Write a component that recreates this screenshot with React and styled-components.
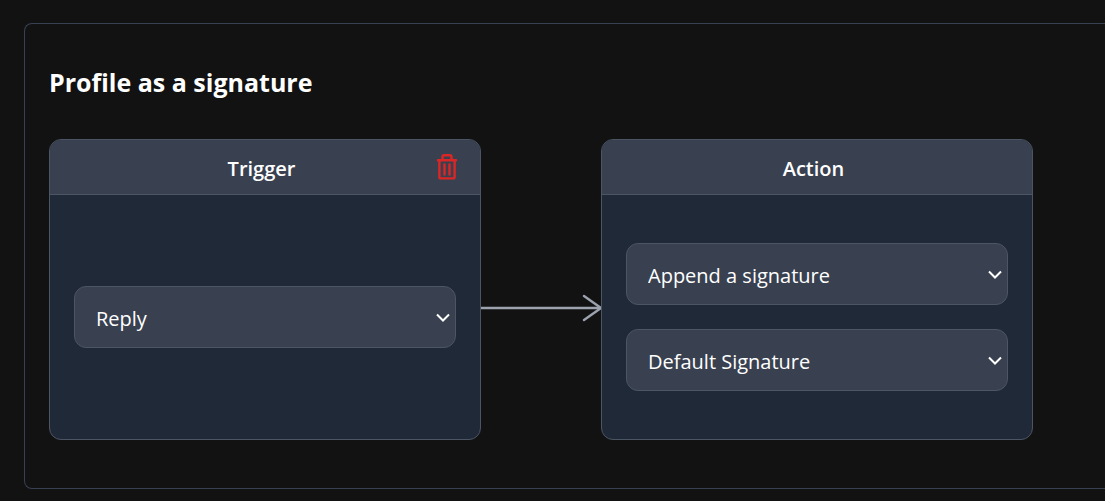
import React from "react";
import styled, { createGlobalStyle } from "styled-components";

const GlobalStyle = createGlobalStyle`
  *, *::before, *::after { box-sizing: border-box; }
  body {
    margin: 0;
    background: #121212;
    color: #ffffff;
    font-family: "Segoe UI", "Open Sans", "Noto Sans", sans-serif;
    overflow-x: hidden;
  }
`;

const Page = styled.main`
  padding: 23px 0 12px 24px;
`;

const Panel = styled.section`
  padding: 40px 24px 48px;
  border: 1px solid #374151;
  border-right: 0;
  border-radius: 8px 0 0 8px;
`;

const Title = styled.h2`
  margin: 0 0 39px;
  font-size: 25px;
  line-height: 36px;
  font-weight: 700;
`;

const Flow = styled.div`
  display: grid;
  grid-template-columns: minmax(0, 432px) 120px minmax(0, 432px);
`;

const Card = styled.article`
  display: flex;
  flex-direction: column;
  overflow: hidden;
  border: 1px solid #4b5563;
  border-radius: 12px;
  background: #202938;
`;

const CardHeader = styled.header`
  display: grid;
  grid-template-columns: 24px 1fr 24px;
  align-items: center;
  height: 55px;
  padding: 0 21px 0 14px;
  border-bottom: 1px solid #4b5563;
  background: #394150;
`;

const CardTitle = styled.h3`
  grid-column: 2;
  margin: 0;
  padding-top: 4px;
  font-size: 20px;
  line-height: 28px;
  font-weight: 600;
  text-align: center;
`;

const CardBody = styled.div`
  display: flex;
  flex: 1;
  flex-direction: column;
  justify-content: center;
  gap: 24px;
  padding: 48px 24px;
`;

const DeleteButton = styled.button`
  display: flex;
  padding: 0;
  border: 0;
  background: none;
  color: #dc2626;
  cursor: pointer;
`;

const SelectWrap = styled.div`
  position: relative;
`;

const Select = styled.select`
  appearance: none;
  display: block;
  width: 100%;
  height: 62px;
  padding: 3px 40px 0 21px;
  border: 1px solid #4b5563;
  border-radius: 12px;
  background: #394150;
  color: #ffffff;
  font-family: inherit;
  font-size: 20px;
  line-height: 28px;
`;

const Chevron = styled.svg`
  position: absolute;
  top: 24px;
  right: 5px;
  pointer-events: none;
`;

const Connector = styled.div`
  display: flex;
  align-items: center;
  padding-top: 37px;
`;

function TrashIcon() {
  return (
    <svg width="24" height="28" viewBox="0 0 24 28" fill="none" stroke="currentColor" strokeWidth="2.4" strokeLinecap="round" strokeLinejoin="round" aria-hidden="true">
      <path d="M3 7.3H21M7.5 7.3V4Q7.5 2.2 9.3 2.2H14.7Q16.5 2.2 16.5 4V7.3" />
      <path d="M4.4 7.3V23.9Q4.4 25.4 5.9 25.4H18.1Q19.6 25.4 19.6 23.9V7.3" />
      <path d="M9.5 11.5V21.5M14.5 11.5V21.5" />
    </svg>
  );
}

function Arrow() {
  return (
    <svg width="120" height="28" viewBox="0 0 120 28" fill="none" stroke="#9ca3af" strokeWidth="2.4" strokeLinecap="round" aria-hidden="true">
      <path d="M0 14H119" strokeLinecap="butt" />
      <path d="M103 2L120 14L103 26" />
    </svg>
  );
}

function SelectField({ label, options }) {
  return (
    <SelectWrap>
      <Select aria-label={label} defaultValue={options[0]}>
        {options.map((option) => (
          <option key={option}>{option}</option>
        ))}
      </Select>
      <Chevron width="16" height="16" viewBox="0 0 16 16" fill="none" stroke="#ffffff" strokeWidth="2" aria-hidden="true">
        <path d="M2 4.5L8 10.5L14 4.5" />
      </Chevron>
    </SelectWrap>
  );
}

export default function App() {
  return (
    <>
      <GlobalStyle />
      <Page>
        <Panel>
          <Title>Profile as a signature</Title>
          <Flow>
            <Card>
              <CardHeader>
                <CardTitle>Trigger</CardTitle>
                <DeleteButton type="button" aria-label="Delete trigger">
                  <TrashIcon />
                </DeleteButton>
              </CardHeader>
              <CardBody>
                <SelectField label="Trigger" options={["Reply"]} />
              </CardBody>
            </Card>
            <Connector>
              <Arrow />
            </Connector>
            <Card>
              <CardHeader>
                <CardTitle>Action</CardTitle>
              </CardHeader>
              <CardBody>
                <SelectField label="Action" options={["Append a signature"]} />
                <SelectField label="Signature" options={["Default Signature"]} />
              </CardBody>
            </Card>
          </Flow>
        </Panel>
      </Page>
    </>
  );
}
